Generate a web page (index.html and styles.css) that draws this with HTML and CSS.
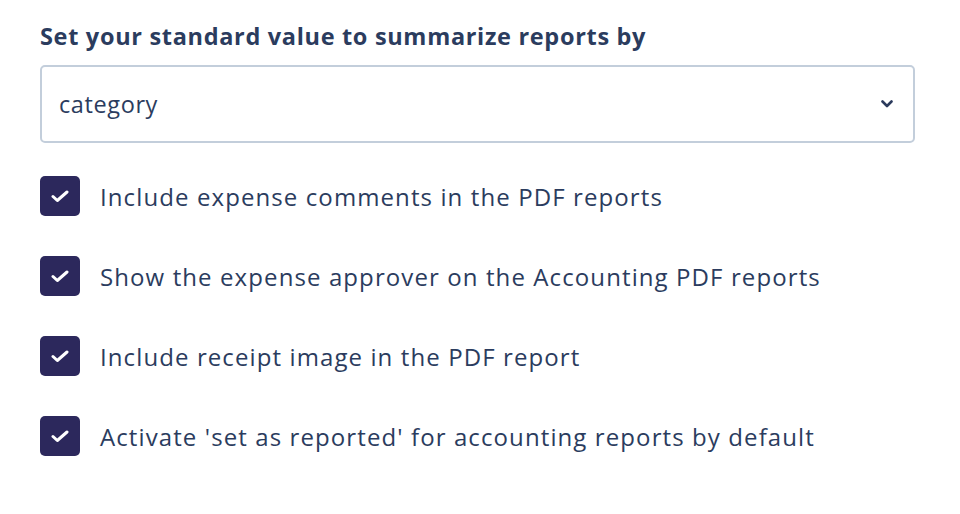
FILE: index.html
```html
<!DOCTYPE html>
<html lang="en">
<head>
  <meta charset="UTF-8" />
  <meta name="viewport" content="width=device-width, initial-scale=1.0"/>
  <title>Report settings</title>
  <link rel="stylesheet" href="styles.css">
</head>
<body>

  <div class="settings">
    <label class="title" for="summarize">Set your standard value to summarize reports by</label>

    <div class="select-box">
      <span class="select-value">category</span>
      <svg class="chevron" width="12" height="8" viewBox="0 0 12 8">
        <path d="M1.5 1.5 L6 6 L10.5 1.5" fill="none" stroke="#2b3a5c" stroke-width="2.6" stroke-linecap="round" stroke-linejoin="round"/>
      </svg>
    </div>

    <div class="options">
      <div class="option">
        <span class="check">
          <svg width="18" height="13" viewBox="0 0 18 13"><path d="M2 6.5 L6.3 10.5 L16 2" fill="none" stroke="#fff" stroke-width="3" stroke-linecap="round" stroke-linejoin="round"/></svg>
        </span>
        <span class="option-text">Include expense comments in the PDF reports</span>
      </div>
      <div class="option">
        <span class="check">
          <svg width="18" height="13" viewBox="0 0 18 13"><path d="M2 6.5 L6.3 10.5 L16 2" fill="none" stroke="#fff" stroke-width="3" stroke-linecap="round" stroke-linejoin="round"/></svg>
        </span>
        <span class="option-text">Show the expense approver on the Accounting PDF reports</span>
      </div>
      <div class="option">
        <span class="check">
          <svg width="18" height="13" viewBox="0 0 18 13"><path d="M2 6.5 L6.3 10.5 L16 2" fill="none" stroke="#fff" stroke-width="3" stroke-linecap="round" stroke-linejoin="round"/></svg>
        </span>
        <span class="option-text">Include receipt image in the PDF report</span>
      </div>
      <div class="option">
        <span class="check">
          <svg width="18" height="13" viewBox="0 0 18 13"><path d="M2 6.5 L6.3 10.5 L16 2" fill="none" stroke="#fff" stroke-width="3" stroke-linecap="round" stroke-linejoin="round"/></svg>
        </span>
        <span class="option-text">Activate 'set as reported' for accounting reports by default</span>
      </div>
    </div>
  </div>

</body>
</html>
```

FILE: styles.css
```css
body {
  margin: 0;
  background: #fff;
  font-family: 'Open Sans', sans-serif;
  color: #2b3c5e;
}

.settings {
  padding: 21px 45px 0 40px;
}

.title {
  display: block;
  font-size: 23.5px;
  font-weight: 700;
  letter-spacing: 0.68px;
  line-height: 30px;
  margin-bottom: 14px;
}

.select-box {
  display: flex;
  align-items: center;
  justify-content: space-between;
  height: 74px;
  border: 2px solid #c3cedb;
  border-radius: 5px;
  padding: 0 20px 0 17px;
}

.select-value {
  font-size: 23.5px;
  letter-spacing: 0.6px;
}

.chevron {
  display: block;
}

.options {
  display: flex;
  flex-direction: column;
  gap: 40px;
  margin-top: 33px;
}

.option {
  display: flex;
  align-items: center;
  gap: 20px;
  height: 40px;
}

.check {
  display: flex;
  align-items: center;
  justify-content: center;
  width: 40px;
  height: 40px;
  border-radius: 5px;
  background: #2c285c;
}

.check svg {
  display: block;
  margin: 1px 1px 0 0;
}

.option-text {
  font-size: 24px;
  letter-spacing: 1.1px;
}
```
